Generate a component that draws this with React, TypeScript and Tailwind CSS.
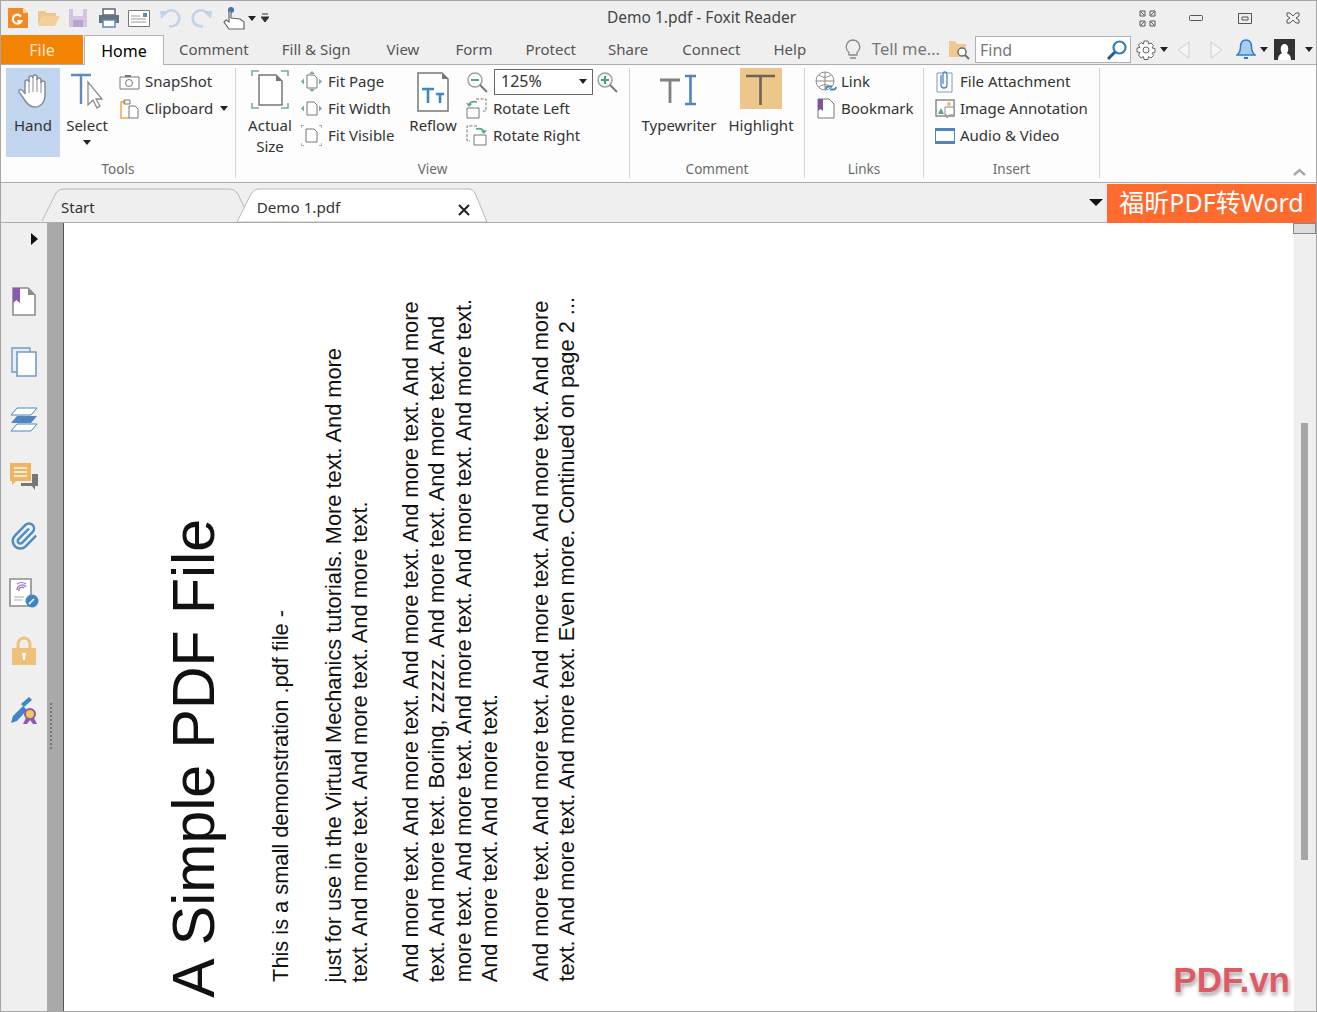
import React from "react";

const uiFont = "[font-family:'Noto_Sans','Open_Sans',sans-serif]";

// little svg wrapper so the icons below stay short
function Ico({ w = 20, h = 20, className = "", children }: { w?: number; h?: number; className?: string; children: React.ReactNode }) {
  return (
    <svg width={w} height={h} viewBox={`0 0 ${w} ${h}`} fill="none" className={`shrink-0 ${className}`}>
      {children}
    </svg>
  );
}

function Caret({ className = "" }: { className?: string }) {
  return (
    <svg width="8" height="5" viewBox="0 0 8 5" className={`shrink-0 ${className}`}>
      <path d="M0 0h8L4 5z" fill="#222" />
    </svg>
  );
}

function QuickBar() {
  return (
    <div className="flex items-center h-[35px] pl-[6px] w-[386px]">
      <Ico w={22} h={22}>
        <path d="M1 1h15l5 5v15H1z" fill="#f08a24" />
        <path d="M16 1l5 5h-5z" fill="#fbd9b0" />
        <path d="M14 9.500a4.500 4.500 0 1 0 .5 4.500h-4" stroke="#fff" strokeWidth="2.200" />
      </Ico>
      <Ico w={24} h={20} className="ml-[8px]">
        <path d="M1 17V3h7l2 2h9v3H6z" fill="#efc78d" />
        <path d="M1 18l5-10h17l-5 10z" fill="#f3cf9b" />
      </Ico>
      <Ico w={20} h={20} className="ml-[7px]">
        <path d="M1 1h18v18H1z" fill="#d3c4df" />
        <path d="M5 1h10v7H5z" fill="#efeaf3" />
        <path d="M5 12h10v7H5z" fill="#b9a5cb" />
      </Ico>
      <Ico w={22} h={20} className="ml-[10px]">
        <path d="M5 1h12v6H5z" fill="#fff" stroke="#5d6a78" strokeWidth="1.500" />
        <path d="M1 7h20v8H1z" fill="#68727e" />
        <path d="M5 12h12v7H5z" fill="#fff" stroke="#5d8bbd" strokeWidth="1.500" />
      </Ico>
      <Ico w={22} h={17} className="ml-[8px]">
        <path d="M.5.5h21v16H.5z" fill="#fff" stroke="#777" />
        <path d="M15 3h4v4h-4z" fill="#5d8bbd" />
        <path d="M3 6h9M3 9h15M3 12h15" stroke="#999" />
      </Ico>
      <Ico w={21} h={20} className="ml-[10px]">
        <path d="M4 7A8 8 0 1 1 9 18" stroke="#c3d3e6" strokeWidth="2.600" />
        <path d="M0 3h8L1 11z" fill="#c3d3e6" />
      </Ico>
      <Ico w={21} h={20} className="ml-[10px]">
        <path d="M17 7A8 8 0 1 0 12 18" stroke="#c3d3e6" strokeWidth="2.600" />
        <path d="M21 3h-8l7 8z" fill="#c3d3e6" />
      </Ico>
      <Ico w={24} h={24} className="ml-[11px]">
        <circle cx="8" cy="4" r="3" fill="#3f76b3" />
        <path d="M6 5v11l-3-2-2 2 5 7h15v-7l-4-3-9-1V5z" fill="#fff" stroke="#666" strokeWidth="1.200" />
      </Ico>
      <Caret className="ml-[1px]" />
      <Ico w={8} h={10} className="ml-[5px]">
        <path d="M1 1h6M0 4h8L4 9z" stroke="#333" fill="#333" />
      </Ico>
    </div>
  );
}

function WindowButtons() {
  return (
    <div className="flex items-center h-[35px] w-[300px] justify-end pr-[16px]">
      <Ico w={17} h={17}>
        <path d="M1 1h5v5H1zM11 1h5v5h-5zM1 11h5v5H1zM11 11h5v5h-5z" stroke="#555" />
        <path d="M2 2l3 3M15 2l-3 3M2 15l3-3M15 15l-3-3" stroke="#555" />
      </Ico>
      <Ico w={14} h={6} className="ml-[33px]">
        <rect x=".5" y=".5" width="13" height="5" rx="1" stroke="#555" />
      </Ico>
      <Ico w={14} h={11} className="ml-[35px]">
        <path d="M.5.5h13v10H.5z" stroke="#555" />
        <path d="M4 4h6v3H4z" stroke="#555" />
      </Ico>
      <Ico w={14} h={12} className="ml-[34px]">
        <path d="M1 1h3l3 3 3-3h3v3l-3 2 3 2v3h-3L7 8l-3 3H1V8l3-2-3-2z" stroke="#555" fill="#f0f0f0" />
      </Ico>
    </div>
  );
}

function TabRow() {
  const tabs: [string, string][] = [
    ["Comment", "ml-[15px]"],
    ["Fill & Sign", "ml-[33px]"],
    ["View", "ml-[36px]"],
    ["Form", "ml-[36px]"],
    ["Protect", "ml-[33px]"],
    ["Share", "ml-[32px]"],
    ["Connect", "ml-[34px]"],
    ["Help", "ml-[33px]"],
  ];
  return (
    <div className="relative flex items-end h-[30px] border-b border-[#adadad]">
      <div className="h-[29px] w-[82px] bg-[#f28303] text-[#fde7cd] text-[16px] flex items-center justify-center">File</div>
      <div className="relative top-[1px] ml-[1px] h-[30px] w-[80px] bg-white border border-b-0 border-[#b4b4b4] flex items-center justify-center text-[16px] text-black">
        Home
      </div>
      {tabs.map(([t, ml]) => (
        <div key={t} className={`${ml} h-[29px] flex items-center text-[15px] text-[#555] whitespace-nowrap`}>
          {t}
        </div>
      ))}
      <div className="ml-auto flex items-center h-[29px] pr-[3px]">
        <Ico w={16} h={21}>
          <path d="M8 1a7 7 0 0 1 4 12.500V16H4v-2.500A7 7 0 0 1 8 1zM5 19h6" stroke="#8a8a8a" strokeWidth="1.300" />
        </Ico>
        <span className="ml-[11px] text-[16.500px] text-[#777] whitespace-nowrap">Tell me...</span>
        <Ico w={22} h={21} className="ml-[8px]">
          <path d="M1 18V2h6l2 3h9v13z" fill="#efc890" />
          <circle cx="14" cy="13" r="4" fill="#fff" stroke="#6d6d6d" strokeWidth="1.500" />
          <path d="M17 16l4 4" stroke="#6d6d6d" strokeWidth="2" />
        </Ico>
        <div className="ml-[5px] h-[27px] w-[156px] bg-white border border-[#b0b0b0] flex items-center pl-[4px] pr-[2px] text-[16px] text-[#777]">
          Find
          <Ico w={22} h={22} className="ml-auto">
            <circle cx="13.500" cy="8.500" r="6" stroke="#2d7fc0" strokeWidth="2.200" />
            <path d="M9 13l-7 7" stroke="#1d5d96" strokeWidth="3" />
          </Ico>
        </div>
        <Ico w={20} h={20} className="ml-[5px]">
          <path d="M8 1h4l.5 3 2.500-1 2.500 2.500-1.500 2.500 3 .5v4l-3 .5 1.500 2.500-2.500 2.500-2.500-1.500-.5 3H8l-.5-3-2.500 1.500L2.500 15 4 12.500 1 12V8l3-.5L2.500 5 5 2.500 7.500 4z" stroke="#666" fill="#fff" />
          <circle cx="10" cy="10" r="3" stroke="#666" />
        </Ico>
        <Caret className="ml-[4px]" />
        <Ico w={13} h={18} className="ml-[9px]">
          <path d="M12 1v16L1 9z" stroke="#cfcfcf" fill="#f4f4f4" />
        </Ico>
        <Ico w={13} h={18} className="ml-[20px]">
          <path d="M1 1v16l11-8z" stroke="#cfcfcf" fill="#f4f4f4" />
        </Ico>
        <Ico w={20} h={21} className="ml-[13px]">
          <path d="M10 1c4 0 5.500 3 5.500 7 0 4 1 6 3.500 8H1c2.500-2 3.500-4 3.500-8 0-4 1.500-7 5.500-7z" fill="#a8cdf0" stroke="#2f7fc4" strokeWidth="1.500" />
          <path d="M8 19h4" stroke="#2f7fc4" strokeWidth="2" />
        </Ico>
        <Caret className="ml-[4px]" />
        <Ico w={21} h={21} className="ml-[6px]">
          <path d="M0 0h21v21H0z" fill="#333" />
          <path d="M4 21c0-5 3-6 4-7-2-2-2-9 2.500-9S15 12 13 14c1 1 4 2 4 7z" fill="#fff" />
        </Ico>
        <Caret className="ml-[10px]" />
      </div>
    </div>
  );
}

function SmallItem({ icon, label, caret, textClass = "ml-[5px]" }: { icon: React.ReactNode; label: string; caret?: boolean; textClass?: string }) {
  return (
    <div className="flex items-center h-[27px] text-[15px] text-[#333] whitespace-nowrap">
      <span className="flex w-[21px] justify-center">{icon}</span>
      <span className={textClass}>{label}</span>
      {caret && <Caret className="ml-[7px]" />}
    </div>
  );
}

function Group({ label, width, children, last }: { label?: string; width: string; children: React.ReactNode; last?: boolean }) {
  return (
    <div className={`${width} shrink-0 flex flex-col ${last ? "" : "border-r border-[#d4d4d4]"} h-[110px]`}>
      <div className="flex flex-1 min-h-0">{children}</div>
      {label && <div className="text-center text-[13.500px] leading-[18px] text-[#6a6a6a]">{label}</div>}
    </div>
  );
}

function Ribbon() {
  return (
    <div className="flex h-[118px] bg-[#fdfdfd] border-b border-[#adadad] pt-[3px] text-[#333] relative">
      <Group label="Tools" width="w-[235px]">
        <div className="ml-[5px] w-[54px] h-[89px] bg-[#c2d5ef] flex flex-col items-center pt-[4px] text-[15px]">
          <Ico w={34} h={38}>
            <path d="M9 22V10a2 2 0 0 1 4 0V6a2 2 0 0 1 4 0v-1a2 2 0 0 1 4 0v3a2 2 0 0 1 4 0v3a2 2 0 0 1 4 0v12c0 7-4 12-10 12-5 0-8-3-11-8l-5-7c-1-3 3-4 6 2z" fill="#fff" stroke="#858d98" strokeWidth="1.500" />
            <path d="M13 8v13M17 5v15M21 6v14M25 9v12" stroke="#858d98" />
          </Ico>
          <span className="mt-[4px]">Hand</span>
        </div>
        <div className="ml-[2px] w-[50px] flex flex-col items-center pt-[4px] text-[15px]">
          <Ico w={38} h={38}>
            <path d="M3 3h20M13 3v29" stroke="#5d8bbd" strokeWidth="2.400" />
            <path d="M20 10v23l5-5 4 8 3-2-4-7h6z" fill="#fff" stroke="#8a8a8a" strokeWidth="1.300" />
          </Ico>
          <span className="mt-[3px] leading-[24px]">Select</span>
          <Caret className="mt-[3px]" />
        </div>
        <div className="ml-[7px]">
          <SmallItem
            label="SnapShot"
            icon={
              <Ico w={21} h={16}>
                <path d="M1 3h19v12H1z" fill="#fff" stroke="#777" />
                <path d="M6 1h6v2H6z" fill="#777" />
                <circle cx="10" cy="9" r="3.500" stroke="#777" />
              </Ico>
            }
          />
          <SmallItem
            label="Clipboard"
            caret
            icon={
              <Ico w={19} h={20}>
                <path d="M6 3H1v16h8" stroke="#f0a64a" strokeWidth="1.500" />
                <path d="M4 1h6v4H4z" stroke="#777" />
                <path d="M9 7h6l3 3v9H9z" fill="#fff" stroke="#777" />
              </Ico>
            }
          />
        </div>
      </Group>

      <Group label="View" width="w-[394px]">
        <div className="ml-[11px] w-[46px] flex flex-col items-center text-[15px] leading-[21px]">
          <Ico w={40} h={44}>
            <path d="M9 7h17l6 6v24H9z" fill="#fff" stroke="#777" strokeWidth="1.500" />
            <path d="M26 7l6 6h-6z" fill="#777" />
            <path d="M2 8V3h7M31 3h7v5M2 35v5h7M31 40h7v-5" stroke="#7ba99a" strokeWidth="1.600" />
          </Ico>
          <span className="mt-[3px]">Actual</span>
          <span>Size</span>
        </div>
        <div className="ml-[8px] w-[108px]">
          <SmallItem
            label="Fit Page"
            textClass="ml-[6px]"
            icon={
              <Ico w={21} h={21}>
                <path d="M6 4h7l3 3v10H6z" fill="#fff" stroke="#777" />
                <path d="M11 0l-3 3h6zM11 21l-3-3h6zM0 10.500l3-3v6zM21 10.500l-3-3v6z" fill="#7ba99a" />
              </Ico>
            }
          />
          <SmallItem
            label="Fit Width"
            textClass="ml-[6px]"
            icon={
              <Ico w={21} h={21}>
                <path d="M6 4h7l3 3v10H6z" fill="#fff" stroke="#777" />
                <path d="M0 10.500l3-3v6zM21 10.500l-3-3v6z" fill="#7ba99a" />
              </Ico>
            }
          />
          <SmallItem
            label="Fit Visible"
            textClass="ml-[6px]"
            icon={
              <Ico w={21} h={21}>
                <path d="M5 4h8l3 3v10H5z" fill="#fff" stroke="#777" />
                <path d="M0 3V0h3M18 0h3v3M0 18v3h3M21 18v3h-3" stroke="#7ba99a" strokeWidth="1.300" />
              </Ico>
            }
          />
        </div>
        <div className="w-[48px] flex flex-col items-center text-[15px]">
          <Ico w={34} h={40} className="mt-[4px]">
            <path d="M2 1h24l6 6v32H2z" fill="#fff" stroke="#777" strokeWidth="1.500" />
            <path d="M26 1l6 6h-6z" fill="#777" />
            <path d="M6 17h12M12 17v14M20 22h8M24 22v9" stroke="#3c86c2" strokeWidth="2.600" />
          </Ico>
          <span className="mt-[2px]">Reflow</span>
        </div>
        <div className="ml-[9px] w-[160px] flex flex-col">
          <div className="flex items-center h-[27px]">
            <Ico w={22} h={22}>
              <circle cx="9" cy="9" r="7" fill="#fff" stroke="#9aa3a6" strokeWidth="1.500" />
              <path d="M5 9h8" stroke="#5aa58a" strokeWidth="2" />
              <path d="M14 14l7 7" stroke="#777" strokeWidth="2" />
            </Ico>
            <div className="ml-[6px] w-[99px] h-[26px] border border-[#666] bg-white flex items-center pl-[6px] pr-[5px] pb-[2px] text-[16px]">
              125%
              <Caret className="ml-auto mt-[2px]" />
            </div>
            <Ico w={22} h={22} className="ml-[3px]">
              <circle cx="9" cy="9" r="7" fill="#eef5f2" stroke="#9aa3a6" strokeWidth="1.500" />
              <path d="M5 9h8M9 5v8" stroke="#45a383" strokeWidth="2" />
              <path d="M14 14l7 7" stroke="#777" strokeWidth="2" />
            </Ico>
          </div>
          <SmallItem
            label="Rotate Left"
            textClass="ml-[6px]"
            icon={
              <Ico w={21} h={21}>
                <path d="M10 1h10v12h-3" stroke="#777" strokeDasharray="3 1.500" />
                <path d="M1 10h12v10H1z" fill="#fff" stroke="#777" />
                <path d="M3 7c1-3 4-4 8-3" stroke="#5aa58a" strokeWidth="1.600" />
                <path d="M0 5l3 4 3-3z" fill="#5aa58a" />
              </Ico>
            }
          />
          <SmallItem
            label="Rotate Right"
            textClass="ml-[6px]"
            icon={
              <Ico w={21} h={21}>
                <path d="M11 1H1v15h3" stroke="#777" strokeDasharray="3 1.500" />
                <path d="M8 10h12v10H8z" fill="#fff" stroke="#777" />
                <path d="M18 7c-1-3-4-4-8-3" stroke="#5aa58a" strokeWidth="1.600" />
                <path d="M21 5l-3 4-3-3z" fill="#5aa58a" />
              </Ico>
            }
          />
        </div>
      </Group>

      <Group label="Comment" width="w-[175px]">
        <div className="ml-[11px] w-[76px] flex flex-col items-center text-[15px]">
          <Ico w={40} h={36} className="mt-[5px]">
            <path d="M1 7h20M11 7v23" stroke="#808080" strokeWidth="2.800" />
            <path d="M26 3h11M26 31h11M31.500 3v28" stroke="#4f86bd" strokeWidth="2.600" />
          </Ico>
          <span className="mt-[5px]">Typewriter</span>
        </div>
        <div className="ml-[6px] w-[76px] flex flex-col items-center text-[15px]">
          <div className="w-[42px] h-[41px] bg-[#edc68a] flex items-center justify-center">
            <Ico w={30} h={32}>
              <path d="M0 3h29M14.500 3v29" stroke="#6b6357" strokeWidth="2.600" />
            </Ico>
          </div>
          <span className="mt-[5px] whitespace-nowrap">Highlight</span>
        </div>
      </Group>

      <Group label="Links" width="w-[119px]">
        <div className="ml-[10px]">
          <SmallItem
            label="Link"
            icon={
              <Ico w={22} h={22}>
                <circle cx="10" cy="10" r="9" fill="#fff" stroke="#8a8a8a" />
                <path d="M1 10h18M10 1v18M4 4c4 3 8 3 12 0M4 16c4-3 8-3 12 0" stroke="#8a8a8a" />
                <path d="M11 18a2.500 2.500 0 0 1 2.500-2.500H17M21 16a2.500 2.500 0 0 1-2.500 2.500H15" stroke="#3f86c6" strokeWidth="1.800" />
              </Ico>
            }
          />
          <SmallItem
            label="Bookmark"
            icon={
              <Ico w={19} h={21}>
                <path d="M2 1h11l5 5v14H2z" fill="#fff" stroke="#777" />
                <path d="M2 1h5v12l-2.500-2L2 13z" fill="#7d569e" />
              </Ico>
            }
          />
        </div>
      </Group>

      <Group label="Insert" width="w-[176px]">
        <div className="ml-[10px]">
          <SmallItem
            label="File Attachment"
            icon={
              <Ico w={17} h={22}>
                <path d="M1 2h15v19H1z" fill="#fff" stroke="#7d9ab5" />
                <path d="M5 4v10a3 3 0 0 0 6 0V3a2 2 0 0 0-4 0v10" stroke="#4f86bd" strokeWidth="1.300" />
              </Ico>
            }
          />
          <SmallItem
            label="Image Annotation"
            icon={
              <Ico w={20} h={20}>
                <path d="M1 1h18v16H1z" fill="#fff" stroke="#8a8a8a" strokeWidth="1.500" />
                <path d="M3 15l3-6 3 6z" fill="#5aa58a" />
                <path d="M10 8h9v8h-5l-2 3v-3h-2z" fill="#fff" stroke="#8a8a8a" />
                <circle cx="14" cy="5" r="2" fill="#f0b46e" />
              </Ico>
            }
          />
          <SmallItem
            label="Audio & Video"
            icon={
              <Ico w={20} h={16}>
                <path d="M.5 1h19v14H.5z" fill="#fff" stroke="#4f86bd" />
                <path d="M0 0h20v3H0zM0 13h20v3H0z" fill="#4f86bd" />
              </Ico>
            }
          />
        </div>
      </Group>

      <Ico w={13} h={8} className="absolute right-[10px] bottom-[6px]">
        <path d="M1 7l5.500-5L12 7" stroke="#a8a8a8" strokeWidth="2.400" />
      </Ico>
    </div>
  );
}

function DocTabs() {
  return (
    <div className="relative flex items-end h-[40px] bg-[#efefef] border-b border-[#adadad]">
      <svg width="490" height="40" viewBox="0 0 490 40" className="absolute left-0 bottom-0" fill="none">
        <path d="M41 39L55 11q3-4 7-4h167q5 0 8 5l6 13" fill="#efefef" stroke="#b8b8b8" />
        <path d="M236 40L250 12q3-5 7-5h211q4 0 6 4l12 29z" fill="#fff" stroke="#b8b8b8" />
      </svg>
      <span className="relative ml-[60px] h-[26px] text-[15px] text-[#333]">Start</span>
      <span className="relative ml-[162px] h-[26px] text-[15.200px] text-[#333]">Demo 1.pdf</span>
      <Ico w={12} h={12} className="relative ml-[118px] mb-[6px]">
        <path d="M1 1l10 10M11 1L1 11" stroke="#222" strokeWidth="2" />
      </Ico>
      <div className="ml-auto flex items-center self-stretch">
        <svg width="14" height="7" viewBox="0 0 14 7" className="mr-[4px]">
          <path d="M0 0h14L7 7z" fill="#111" />
        </svg>
        <div className="w-[209px] h-[39px] mt-[1px] bg-[#ff6a2f] text-white text-[25px] flex items-center justify-center whitespace-nowrap [font-family:'Noto_Sans','Noto_Sans_CJK_SC',sans-serif]">
          福昕PDF转Word
        </div>
      </div>
    </div>
  );
}

function SidePanel() {
  return (
    <div className="w-[46px] shrink-0 bg-[#efefef] flex flex-col items-center relative">
      <svg width="7" height="12" viewBox="0 0 7 12" className="mt-[10px] ml-[21px]">
        <path d="M0 0l7 6-7 6z" fill="#111" />
      </svg>
      <Ico w={24} h={30} className="mt-[42px]">
        <path d="M1 1h15l7 7v20H1z" fill="#fff" stroke="#8c8c8c" strokeWidth="1.600" />
        <path d="M16 1l7 7h-7z" fill="#8c8c8c" />
        <path d="M1 1h7v15l-3.500-3L1 16z" fill="#8a5aae" />
      </Ico>
      <Ico w={26} h={30} className="mt-[30px]">
        <path d="M1 1h18v24H1z" fill="#e5eef8" stroke="#6f9bc9" strokeWidth="1.400" />
        <path d="M6 5h19v24H6z" fill="#fff" stroke="#6f9bc9" strokeWidth="1.600" />
      </Ico>
      <Ico w={30} h={26} className="mt-[30px]">
        <path d="M8 1h20l-6 7H2z" fill="#fff" stroke="#4f86bd" />
        <path d="M8 9h20l-6 7H2z" fill="#4f86bd" />
        <path d="M8 17h20l-6 7H2z" fill="#fff" stroke="#4f86bd" />
      </Ico>
      <Ico w={29} h={28} className="mt-[30px]">
        <path d="M0 0h21v18H6l-4 4v-4H0z" fill="#f0b35e" />
        <path d="M4 5h13M4 9h13M4 13h13" stroke="#fff" strokeWidth="1.300" />
        <path d="M22 11h6v12h-3v4l-3-4H11v-3h11z" fill="#777" />
      </Ico>
      <svg width="30" height="30" viewBox="0 0 24 24" fill="none" stroke="#4f8cc4" strokeWidth="2" className="mt-[30px] shrink-0">
        <path d="m16 6-8.414 8.586a2 2 0 0 0 2.829 2.829l8.414-8.586a4 4 0 1 0-5.657-5.657l-8.379 8.551a6 6 0 1 0 8.485 8.485l8.379-8.551" />
      </svg>
      <Ico w={30} h={30} className="mt-[27px]">
        <path d="M1 1h21v27H1z" fill="#fff" stroke="#8c8c8c" strokeWidth="1.600" />
        <path d="M8 12a5 5 0 0 1 9-3M10 13a3 3 0 0 1 5-3M8 6c3-2 6-2 9 0" stroke="#9a6fc0" strokeWidth="1.200" />
        <path d="M5 19h10M5 22h8" stroke="#aaa" />
        <circle cx="23" cy="23" r="6.500" fill="#3f86c6" />
        <path d="M20 26l5-5" stroke="#fff" strokeWidth="1.600" />
      </Ico>
      <Ico w={24} h={30} className="mt-[28px]">
        <path d="M6 13V8a6 6 0 0 1 12 0v5" stroke="#efc07a" strokeWidth="3" />
        <path d="M0 12h24v17H0z" fill="#efc07a" />
        <path d="M10 17h4l-1 5v2h-2v-2z" fill="#fff" />
      </Ico>
      <Ico w={28} h={30} className="mt-[30px]">
        <path d="M1 27l2-7L13 10l4 4L7 25z" fill="#3f86c6" />
        <path d="M11 8l8-7 3 3-8 7z" fill="#3f86c6" />
        <circle cx="20" cy="18" r="5" fill="#f0c85e" stroke="#8a5aae" strokeWidth="2" />
        <path d="M16 22l-3 6h4l3-4 3 4h4l-3-6" fill="#8a5aae" />
      </Ico>
    </div>
  );
}

const bodyText = "[font-family:'Liberation_Sans',Arial,sans-serif] text-[21.800px] leading-[26.300px] text-[#111]";

function Vert({ lines, className = "" }: { lines: string[]; className?: string }) {
  return (
    <div className={`[writing-mode:vertical-rl] rotate-180 whitespace-nowrap ${bodyText} ${className}`}>
      {lines.map((l) => (
        <div key={l}>{l}</div>
      ))}
    </div>
  );
}

function PageArea() {
  return (
    <div className="relative flex-1 min-w-0 bg-white flex items-end pl-[97px] pb-[29px]">
      <div className="[writing-mode:vertical-rl] rotate-180 whitespace-nowrap [font-family:'Liberation_Sans',Arial,sans-serif] text-[59px] leading-[66px] text-[#111] mb-[-16px]">
        A Simple PDF File
      </div>
      <Vert className="ml-[41px]" lines={["This is a small demonstration .pdf file -"]} />
      <Vert
        className="ml-[27px]"
        lines={[
          "just for use in the Virtual Mechanics tutorials. More text. And more",
          "text. And more text. And more text. And more text.",
        ]}
      />
      <Vert
        className="ml-[24px]"
        lines={[
          "And more text. And more text. And more text. And more text. And more",
          "text. And more text. Boring, zzzzz. And more text. And more text. And",
          "more text. And more text. And more text. And more text. And more text.",
          "And more text. And more text.",
        ]}
      />
      <Vert
        className="ml-[25px]"
        lines={[
          "And more text. And more text. And more text. And more text. And more",
          "text. And more text. And more text. Even more. Continued on page 2 ...",
        ]}
      />
      <div className="absolute right-[4px] bottom-[14px] [font-family:'Liberation_Sans',Arial,sans-serif] font-bold text-[35px] leading-none text-[#dd5a66] [text-shadow:0_0_2px_rgba(255,255,255,0.9),1px_3px_4px_rgba(0,0,0,0.4)]">
        PDF.vn
      </div>
    </div>
  );
}

export default function App() {
  return (
    <div className={`w-[1317px] h-[1012px] overflow-hidden flex flex-col bg-[#efefef] border border-[#a5a5a5] ${uiFont}`}>
      <div className="flex justify-between items-center h-[34px] shrink-0">
        <QuickBar />
        <span className="text-[15.500px] text-[#444]">Demo 1.pdf - Foxit Reader</span>
        <WindowButtons />
      </div>
      <TabRow />
      <Ribbon />
      <DocTabs />
      <div className="flex flex-1 min-h-0">
        <SidePanel />
        <div className="relative w-[17px] shrink-0 bg-[#a9a9a9] border-r border-[#555]">
          <div className="absolute left-[3px] top-[480px] h-[46px] w-[3px] border-l-2 border-dotted border-[#777]" />
        </div>
        <PageArea />
        <div className="relative w-[22px] shrink-0 bg-[#efefef]">
          <div className="h-[11px] bg-[#dcdcdc] border border-[#888] -ml-[1px]" />
          <div className="absolute left-[7px] top-[200px] w-[7px] h-[437px] bg-[#a6a6a6]" />
        </div>
      </div>
    </div>
  );
}
